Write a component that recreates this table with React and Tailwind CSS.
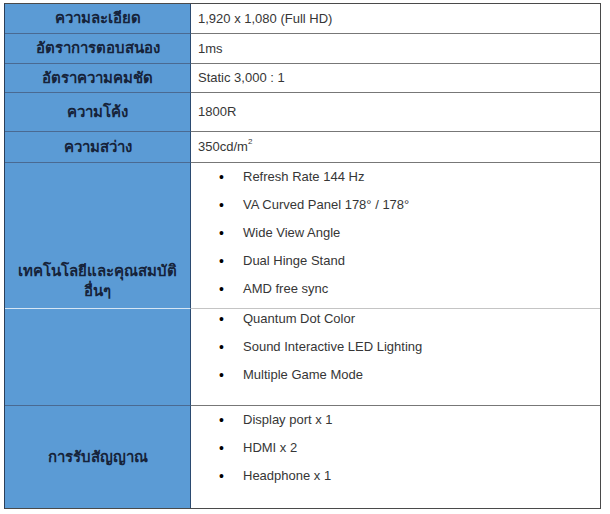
const rows = [
  { label: 'ความละเอียด', value: '1,920 x 1,080 (Full HD)', h: 'h-[30px]' },
  { label: 'อัตราการตอบสนอง', value: '1ms', h: 'h-[30px]' },
  { label: 'อัตราความคมชัด', value: 'Static 3,000 : 1', h: 'h-[29px]' },
  { label: 'ความโค้ง', value: '1800R', h: 'h-[39px]' },
];

const tech = [
  'Refresh Rate 144 Hz',
  'VA Curved Panel 178° / 178°',
  'Wide View Angle',
  'Dual Hinge Stand',
  'AMD free sync',
];

const tech2 = ['Quantum Dot Color', 'Sound Interactive LED Lighting', 'Multiple Game Mode'];

const inputs = ['Display port x 1', 'HDMI x 2', 'Headphone x 1'];

function Bullets({ items, className = '' }) {
  return (
    <ul className={className}>
      {items.map((item) => (
        <li key={item} className="flex h-[28px] items-center">
          <span className="w-[33px] pl-[28px] text-[14px] leading-none text-black">•</span>
          <span className="pl-[19px]">{item}</span>
        </li>
      ))}
    </ul>
  );
}

function Label({ children, className = '' }) {
  return (
    <div
      className={`flex items-center justify-center bg-[#5b9bd5] border-r border-[#2b4a70] text-[15px] font-bold text-[#16233a] ${className}`}
    >
      {children}
    </div>
  );
}

export default function App() {
  return (
    <div
      className="w-[610px] h-[514px] bg-white pt-[3px] pl-[4px]"
      style={{ fontFamily: '"Liberation Sans", Tahoma, "Noto Sans", sans-serif' }}
    >
      <div className="w-[597px] border border-[#4a4a4a] border-l-[#2b3f5a] text-[13px] text-[#363636]">
        {rows.map((r) => (
          <div key={r.label} className={`grid grid-cols-[186px_1fr] ${r.h}`}>
            <Label className="border-b border-b-[#4a6a92]">{r.label}</Label>
            <div className="flex items-center border-b border-[#777] pl-[7px]">{r.value}</div>
          </div>
        ))}

        <div className="grid grid-cols-[186px_1fr] h-[31px]">
          <Label className="border-b border-b-[#4a6a92]">ความสว่าง</Label>
          <div className="flex items-center border-b border-[#777] pl-[7px]">
            350cd/m<sup className="text-[8px] -top-[5px]">2</sup>
          </div>
        </div>

        <div className="grid grid-cols-[186px_1fr] h-[146px]">
          <Label className="items-end pb-[7px] border-b border-b-[#d6e6f5] text-center leading-[20px]">
            <span>
              เทคโนโลยีและคุณสมบัติ
              <br />
              อื่นๆ
            </span>
          </Label>
          <div className="border-b border-[#c4c4c4]">
            <Bullets items={tech} />
          </div>
        </div>

        <div className="grid grid-cols-[186px_1fr] h-[97px]">
          <Label className="border-b border-b-[#4a6a92]" />
          <div className="border-b border-[#777]">
            <Bullets items={tech2} className="-mt-[4px]" />
          </div>
        </div>

        <div className="grid grid-cols-[186px_1fr] h-[102px]">
          <Label>การรับสัญญาณ</Label>
          <div>
            <Bullets items={inputs} />
          </div>
        </div>
      </div>
    </div>
  );
}
